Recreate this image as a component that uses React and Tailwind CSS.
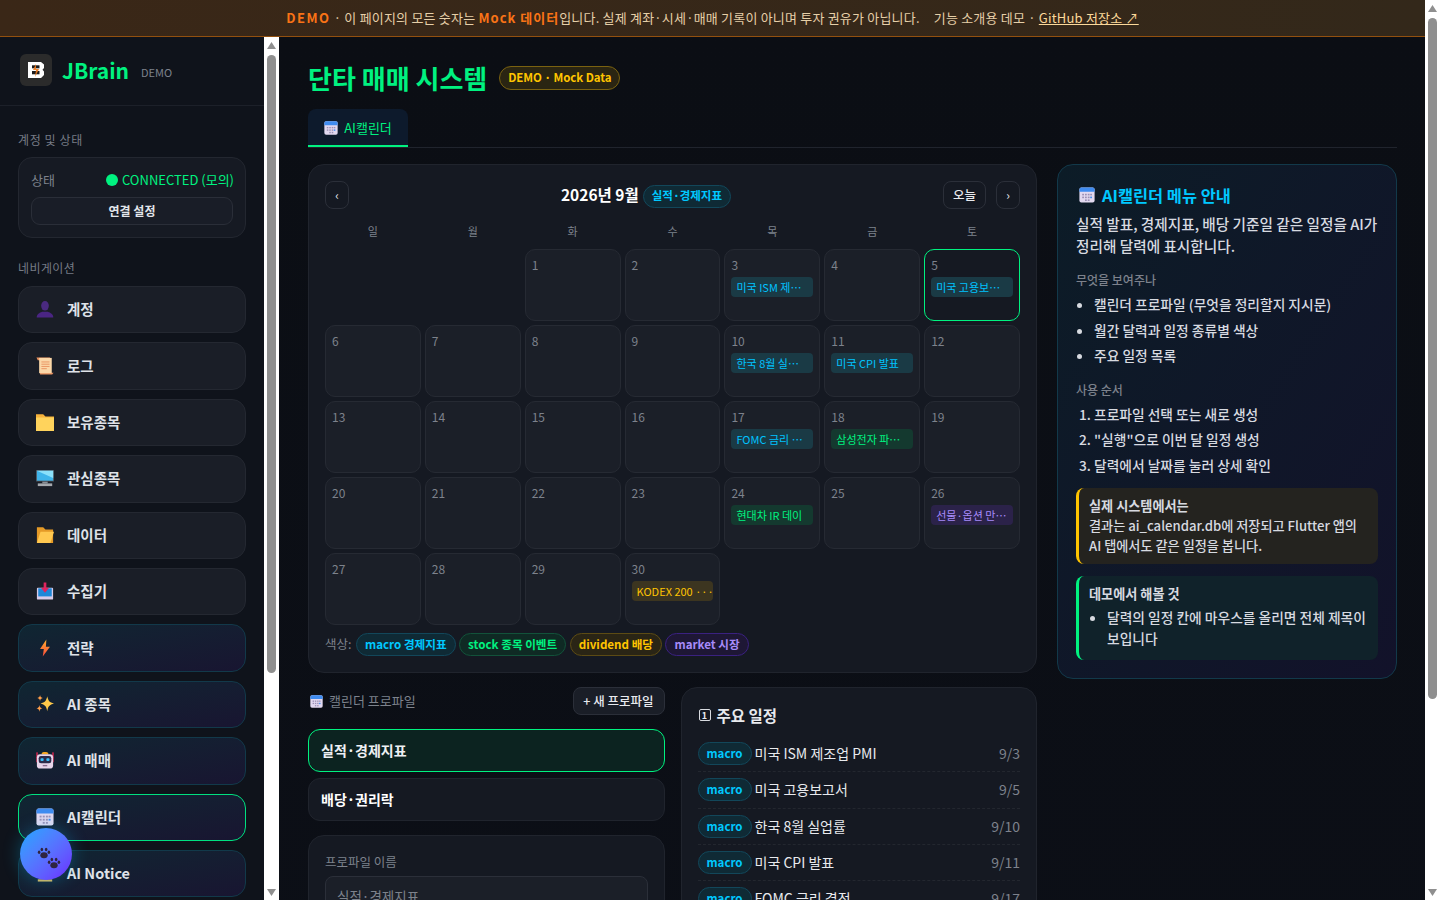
import React from "react";

const I = ({ children, size = 18, className = "" }) => (
  <svg width={size} height={size} viewBox="0 0 20 20" className={`shrink-0 ${className}`}>{children}</svg>
);
const Person = () => (
  <I><ellipse cx="10" cy="6.500" rx="4.300" ry="5.300" fill="#4a2a80" /><path d="M.8 19.500c0-4 3-5.300 6-6.500h6.400c3 1.200 6 2.500 6 6.500z" fill="#4a2583" /></I>
);
const Scroll = () => (
  <I><path d="M.5 .5h15v17h4l-1.500 2H4.500V3.500H2z" fill="#e9915f" /><rect x="3.500" y="1" width="14" height="17" fill="#fbd7a8" /><path d="M6 5.500h9M6 8h9M6 10.500h9M6 13h6" stroke="#e88e5c" strokeWidth="1" /></I>
);
const Folder = () => (
  <I><path d="M0 1.500h8l2.500 2.500H20v16H0z" fill="#f7b23b" /><rect x="0" y="5" width="20" height="15" fill="#ffd35c" /></I>
);
const FolderOpen = () => (
  <I><path d="M1 1.500h7l2.500 2.500H19v15H1z" fill="#e59a27" /><path d="M5 6.500h15l-4 12.500H1z" fill="#ffc850" /></I>
);
const Monitor = () => (
  <I><rect x="0" y="1" width="20" height="13" rx=".5" fill="#50545b" /><rect x="1" y="2" width="18" height="11" fill="#3fb4ea" /><path d="M1 2h18v8z" fill="#8be0fa" /><rect x="7" y="14" width="6" height="2" fill="#8b8f96" /><rect x="2" y="16" width="16" height="3" fill="#a5a8ad" /></I>
);
const Inbox = () => (
  <I><rect x="1" y="6.500" width="18" height="13" rx="1" fill="#d8cbe8" /><rect x="2.500" y="7" width="15" height="9" fill="#1e88d8" /><path d="M8.500 .5h3v6h3L10 12 5.500 6.500h3z" fill="#e0245e" /></I>
);
const Bolt = () => (
  <I><defs><linearGradient id="boltg" x1="0" y1="0" x2="0" y2="1"><stop offset="0" stopColor="#ffb02e" /><stop offset="1" stopColor="#f8483c" /></linearGradient></defs><path d="M11.500 .5 4.500 11h4.200L7.500 19.500 15.500 8.500h-4.500z" fill="url(#boltg)" /></I>
);
const Sparkles = () => (
  <I><path d="M12.500 1.500c1 5 2.500 6.800 7.500 8-5 1.300-6.500 3-7.500 8.500-1-5.500-2.500-7.200-7.500-8.500 5-1.200 6.500-3 7.500-8z" fill="#ffc94a" /><path d="M4.500 0c.4 2.200 1 2.800 3 3.300-2 .5-2.600 1.200-3 3.400-.4-2.200-1-2.900-3-3.400 2-.5 2.600-1.100 3-3.300z" fill="#ff9f4a" /><path d="M3.800 11c.4 2.500 1.100 3.200 3.300 3.700-2.200.5-2.900 1.300-3.300 3.800-.4-2.500-1.100-3.300-3.300-3.800 2.200-.5 2.900-1.200 3.300-3.700z" fill="#ff9f4a" /></I>
);
const Robot = () => (
  <I><rect x=".3" y="1.500" width="1.700" height="11" fill="#d0264f" /><rect x="18" y="1.500" width="1.700" height="11" fill="#d0264f" /><path d="M6.500 2.500c0-2 7-2 7 0v1.500h-7z" fill="#f5a623" /><rect x="1" y="3.500" width="18" height="16" rx="3.500" fill="#e8d5ea" /><rect x="3" y="5.500" width="14" height="8" rx="2.500" fill="#2b2b4a" /><rect x="5" y="8" width="3.500" height="3" rx="1" fill="#38bdf8" /><rect x="11.500" y="8" width="3.500" height="3" rx="1" fill="#38bdf8" /><rect x="7.500" y="15.500" width="5" height="1.500" fill="#8a6d8f" /></I>
);
const Cal = ({ size = 18, className = "" }) => (
  <I size={size} className={className}><rect x=".5" y=".5" width="19" height="19" rx="2.500" fill="#e2d9f0" /><path d="M.5 6V3A2.500 2.500 0 0 1 3 .5h14A2.500 2.500 0 0 1 19.500 3v3z" fill="#3f8cf0" /><g fill="#9c90b5"><rect x="4" y="8.500" width="2.200" height="2" /><rect x="7.500" y="8.500" width="2.200" height="2" /><rect x="11" y="8.500" width="2.200" height="2" /><rect x="14" y="8.500" width="2.200" height="2" /><rect x="4" y="12" width="2.200" height="2" /><rect x="7.500" y="12" width="2.200" height="2" /><rect x="11" y="12" width="2.200" height="2" /><rect x="14" y="12" width="2.200" height="2" fill="#3f8cf0" /><rect x="7.500" y="15.500" width="2.200" height="2" /><rect x="11" y="15.500" width="2.200" height="2" /></g></I>
);
const Megaphone = () => (
  <I><path d="M2 17h16v2.500H2z" fill="#d9b45a" /><path d="M4 16c1-6 2-10 6-10s5 4 6 10z" fill="#f5c542" /></I>
);
const Paw = ({ className = "" }) => (
  <svg width="14" height="12" viewBox="0 0 15 14" className={className}>
    <g fill="#2f2440"><ellipse cx="7.500" cy="9.700" rx="4.300" ry="3.500" /><ellipse cx="1.800" cy="6.200" rx="1.500" ry="2" /><ellipse cx="5" cy="3" rx="1.500" ry="2.100" /><ellipse cx="10" cy="3" rx="1.500" ry="2.100" /><ellipse cx="13.200" cy="6.200" rx="1.500" ry="2" /></g>
  </svg>
);
const BLogo = () => (
  <svg width="18" height="18" viewBox="0 0 18 18">
    <path d="M1 1h13l3 2.500V7l-1.500 1.800L17 10.500V14l-3 3H1z" fill="#fff" />
    <rect x="5" y="4.300" width="7.500" height="3" fill="#1c1c1c" /><rect x="5" y="10" width="7.500" height="3.300" fill="#1c1c1c" />
    <path d="M9 3 6 9h3l-1 7 4-8H9z" fill="#f07a1c" opacity=".9" />
  </svg>
);

function Scrollbar({ thumb }) {
  return (
    <div className="flex w-[15px] shrink-0 flex-col items-center bg-white">
      <svg width="9" height="7" viewBox="0 0 9 7" className="mt-[5px] shrink-0"><path d="M4.500 0 9 7H0z" fill="#8f8f8f" /></svg>
      <div className={`mt-[6px] w-[9px] rounded-[4.500px] bg-[#8f8f8f] ${thumb}`} />
      <svg width="9" height="7" viewBox="0 0 9 7" className="mt-auto mb-[4px] shrink-0"><path d="M4.500 7 9 0H0z" fill="#8f8f8f" /></svg>
    </div>
  );
}

const NAV = [
  ["계정", Person, 0], ["로그", Scroll, 0], ["보유종목", Folder, 0], ["관심종목", Monitor, 0],
  ["데이터", FolderOpen, 0], ["수집기", Inbox, 0], ["전략", Bolt, 1], ["AI 종목", Sparkles, 1],
  ["AI 매매", Robot, 1], ["AI캘린더", Cal, 2], ["AI Notice", Megaphone, 1],
];

const CHIP = {
  macro: "bg-[#1a3a45] text-[#00c2ff]",
  stock: "bg-[#14392f] text-[#00f280]",
  dividend: "bg-[#3c3520] text-[#ffc400]",
  market: "bg-[#2b2249] text-[#a78bfa]",
};
const EVENTS = {
  3: ["미국 ISM 제⋯", "macro"], 5: ["미국 고용보⋯", "macro"], 10: ["한국 8월 실⋯", "macro"],
  11: ["미국 CPI 발표", "macro"], 17: ["FOMC 금리 ⋯", "macro"], 18: ["삼성전자 파⋯", "stock"],
  24: ["현대차 IR 데이", "stock"], 26: ["선물·옵션 만⋯", "market"], 30: ["KODEX 200 ···", "dividend"],
};
const UPCOMING = [
  ["미국 ISM 제조업 PMI", "9/3"], ["미국 고용보고서", "9/5"], ["한국 8월 실업률", "9/10"],
  ["미국 CPI 발표", "9/11"], ["FOMC 금리 결정", "9/17"],
];
const PILL = {
  macro: "border-[#12475a] bg-[#0f2a35] text-[#00c8ff]",
  stock: "border-[#12523a] bg-[#0f2a24] text-[#00f280]",
  dividend: "border-[#5c4b14] bg-[#2a2515] text-[#ffc400]",
  market: "border-[#3a2180] bg-[#1e1735] text-[#a78bfa]",
};

function Sidebar() {
  return (
    <aside className="flex h-[863px] w-[279px] shrink-0 bg-[#0f131b]">
      <div className="w-[264px] overflow-hidden">
        <div className="flex h-[69px] items-center border-b border-[#1c2029] pl-5 pb-[2px]">
          <div className="flex h-8 w-8 items-center justify-center rounded-md bg-[#2b2b2b]"><BLogo /></div>
          <span className="ml-[10px] text-[21px] leading-none font-bold text-[#00f280]">JBrain</span>
          <span className="ml-3 mt-1 text-[11px] text-[#7d828c]">DEMO</span>
        </div>
        <div className="px-[18px]">
          <div className="mt-[25px] mb-[8px] text-[12px] leading-[18px] tracking-[0.6px] text-[#767b85]">계정 및 상태</div>
          <div className="rounded-[14px] border border-[#232730] bg-[#161a23] px-3 pt-[13px] pb-3">
            <div className="flex items-center justify-between text-[13px] leading-[18px]">
              <span className="text-[#7d828c]">상태</span>
              <span className="mr-[-1px] flex items-center gap-[4px] text-[#00f280]"><i className="block h-3 w-3 rounded-full bg-[#00f280]" />CONNECTED (모의)</span>
            </div>
            <div className="mt-[8px] flex h-7 items-center justify-center rounded-[9px] border border-[#2a2e38] bg-[#191d27] text-[12px] font-semibold text-[#e2e5ea]">연결 설정</div>
          </div>
          <div className="mt-[21px] mb-[9px] text-[12px] leading-[18px] tracking-[0.4px] text-[#767b85]">네비게이션</div>
          <nav className="flex flex-col gap-[9px]">
            {NAV.map(([label, Icon, kind]) => (
              <div
                key={label}
                className={
                  "flex h-[47.400px] items-center gap-[13px] rounded-[14px] border pb-px pl-[17px] text-[14.500px] font-bold text-[#dfe2e8] " +
                  (kind === 0
                    ? "border-[#242831] bg-[#1a1e27]"
                    : kind === 1
                    ? "border-[#12394a] bg-gradient-to-br from-[#0f2632] to-[#181531]"
                    : "border-[#00e080] bg-gradient-to-br from-[#0f2632] to-[#181531]")
                }
              >
                <Icon />
                <span>{label}</span>
              </div>
            ))}
          </nav>
        </div>
      </div>
      <Scrollbar thumb="h-[618px]" />
    </aside>
  );
}

function Calendar() {
  const blanks = [0, 1];
  const days = Array.from({ length: 30 }, (_, i) => i + 1);
  return (
    <section className="rounded-2xl border border-[#20242d] bg-[#151922] px-4 pt-4 pb-[16px]">
      <div className="flex h-7 items-center justify-between">
        <div className="flex h-7 w-6 items-center justify-center rounded-lg border border-[#2b2f39] text-[12px] leading-none text-[#e8eaee]">‹</div>
        <div className="flex h-7 items-center justify-center gap-1">
          <span className="text-[15.500px] font-bold text-white">2026년 9월</span>
          <span className={`mt-[2px] flex h-[23px] items-center rounded-full border px-[8px] text-[11.500px] font-bold ${PILL.macro}`}>실적·경제지표</span>
        </div>
        <div className="flex items-center gap-[10px]">
          <div className="flex h-7 w-[43px] items-center justify-center rounded-lg border border-[#2b2f39] text-[12.500px] font-medium text-[#e8eaee]">오늘</div>
          <div className="flex h-7 w-6 items-center justify-center rounded-lg border border-[#2b2f39] text-[12px] leading-none text-[#e8eaee]">›</div>
        </div>
      </div>
      <div className="mt-[13px] grid grid-cols-7 gap-1">
        {["일", "월", "화", "수", "목", "금", "토"].map((d) => (
          <div key={d} className="h-[18px] text-center text-[11px] leading-[18px] text-[#7d828c]">{d}</div>
        ))}
      </div>
      <div className="mt-[9px] grid grid-cols-7 gap-1">
        {blanks.map((b) => <div key={b} />)}
        {days.map((d) => {
          const ev = EVENTS[d];
          return (
            <div key={d} className={"h-[72px] rounded-[10px] border bg-[#1b1f28] px-[6px] pt-[6px] " + (d === 5 ? "border-[#00f280] bg-[#151922]" : "border-[#262a33]")}>
              <div className="text-[12px] leading-[18px] text-[#7d828c]">{d}</div>
              {ev && (
                <div className={`mt-[3px] h-5 overflow-hidden rounded pl-[5px] text-[11px] leading-5 whitespace-nowrap ${CHIP[ev[1]]}`}>{ev[0]}</div>
              )}
            </div>
          );
        })}
      </div>
      <div className="mt-[8px] flex items-center gap-[3.500px] text-[12.500px] text-[#7d828c]">
        <span className="mr-px">색상:</span>
        <span className={`flex h-[23px] items-center rounded-full border px-[8px] text-[11.600px] font-bold ${PILL.macro}`}>macro 경제지표</span>
        <span className={`flex h-[23px] items-center rounded-full border px-[8px] text-[11.600px] font-bold ${PILL.stock}`}>stock 종목 이벤트</span>
        <span className={`flex h-[23px] items-center rounded-full border px-[8px] text-[11.600px] font-bold ${PILL.dividend}`}>dividend 배당</span>
        <span className={`flex h-[23px] items-center rounded-full border px-[8px] text-[11.600px] font-bold ${PILL.market}`}>market 시장</span>
      </div>
    </section>
  );
}

function Guide() {
  return (
    <aside className="w-[340px] shrink-0 self-start rounded-2xl border border-[#12394a] bg-gradient-to-br from-[#0c1c27] to-[#12122a] px-[18px] pt-[18px] pb-[18px] break-keep">
      <div className="flex items-center gap-[7px] text-[16.400px] leading-[24px] font-bold text-[#00c8ff]"><Cal size={16} className="ml-[3px]" /><span>AI캘린더 메뉴 안내</span></div>
      <p className="mt-[6px] text-[14.650px] leading-[22px] font-medium text-[#d7dae0]">실적 발표, 경제지표, 배당 기준일 같은 일정을 AI가 정리해 달력에 표시합니다.</p>
      <div className="mt-[14px] text-[12px] leading-[18px] font-medium text-[#7d828c]">무엇을 보여주나</div>
      <ul className="mt-[6px] list-disc pl-[18px] text-[13.750px] leading-[19.500px] font-medium text-[#d7dae0]">
        <li className="mb-[6px]">캘린더 프로파일 (무엇을 정리할지 지시문)</li>
        <li className="mb-[6px]">월간 달력과 일정 종류별 색상</li>
        <li>주요 일정 목록</li>
      </ul>
      <div className="mt-[15px] text-[12px] leading-[18px] font-medium text-[#7d828c]">사용 순서</div>
      <ol className="mt-[6px] list-decimal pl-[18px] text-[13.750px] leading-[19.500px] font-medium text-[#d7dae0]">
        <li className="mb-[6px]">프로파일 선택 또는 새로 생성</li>
        <li className="mb-[6px]">"실행"으로 이번 달 일정 생성</li>
        <li>달력에서 날짜를 눌러 상세 확인</li>
      </ol>
      <div className="mt-[13px] rounded-lg border-l-[3px] border-[#ffc400] bg-[#24231f] px-[10px] py-[8px] text-[13.150px] leading-[20px] font-medium text-[#d7dae0]">
        <div className="font-bold">실제 시스템에서는</div>
        결과는 ai_calendar.db에 저장되고 Flutter 앱의 AI 탭에서도 같은 일정을 봅니다.
      </div>
      <div className="mt-[12px] rounded-lg border-l-[3px] border-[#00f280] bg-[#10222a] px-[10px] pt-[8px] pb-[11px] text-[13.750px] leading-[21px] font-medium text-[#d7dae0]">
        <div className="text-[13.150px] leading-[20px] font-bold">데모에서 해볼 것</div>
        <ul className="mt-[3px] list-disc pl-[18px]"><li>달력의 일정 칸에 마우스를 올리면 전체 제목이 보입니다</li></ul>
      </div>
    </aside>
  );
}

function Profiles() {
  return (
    <div className="min-w-0">
      <div className="flex h-7 items-center justify-between">
        <div className="flex items-center gap-[6px] pl-[2px] text-[13px] text-[#7d828c]"><Cal size={13} /><span>캘린더 프로파일</span></div>
        <div className="flex h-7 w-[92px] items-center justify-center rounded-lg border border-[#2b2f39] bg-[#1a1e27] text-[12.500px] font-medium text-[#e8eaee]">+ 새 프로파일</div>
      </div>
      <div className="mt-[14px] flex h-[43px] items-center rounded-xl border border-[#00f280] bg-[#0c2320] pl-3 text-[14px] font-bold text-[#eef0f3]">실적·경제지표</div>
      <div className="mt-[6px] flex h-[43px] items-center rounded-xl border border-[#20242d] bg-[#151922] pl-3 text-[14px] font-bold text-white">배당·권리락</div>
      <div className="mt-[14px] h-[300px] rounded-2xl border border-[#20242d] bg-[#151922] px-4 pt-4">
        <div className="text-[12.500px] leading-[20px] text-[#7d828c]">프로파일 이름</div>
        <div className="mt-[4px] flex h-10 items-center rounded-lg border border-[#2b2f39] bg-[#1b1f28] px-[11px] text-[13.500px] text-[#7d828c]">실적·경제지표</div>
      </div>
    </div>
  );
}

function Upcoming() {
  return (
    <div className="h-[393px] min-w-0 rounded-2xl border border-[#20242d] bg-[#151922] px-4 pt-[15px]">
      <div className="flex items-center gap-[6px] pl-px text-[15.500px] leading-[24px] font-bold text-[#e8eaee]">
        <span className="flex h-3 w-3 items-center justify-center rounded-[2px] border border-[#d8dbe0] text-[9px] leading-none">1</span>
        <span>주요 일정</span>
      </div>
      <div className="mt-[9px]">
        {UPCOMING.map(([t, d]) => (
          <div key={t} className="flex h-[36.300px] items-center justify-between border-b border-dashed border-[#23272f] text-[14px]">
            <div className="flex items-center gap-[3px]">
              <span className={`flex h-[23px] items-center rounded-full border px-[8px] text-[11.500px] font-bold ${PILL.macro}`}>macro</span>
              <span className="text-[#e8eaee]">{t}</span>
            </div>
            <span className="text-[#7d828c]">{d}</span>
          </div>
        ))}
      </div>
    </div>
  );
}

export default function App() {
  return (
    <div className="flex h-screen overflow-hidden bg-[#0b0e14] font-['Noto_Sans_CJK_KR','Noto_Sans',sans-serif]">
      <div className="min-w-0 flex-1">
        <div className="flex h-[37px] items-center justify-center border-b border-[#92500f] bg-gradient-to-r from-[#3a2717] to-[#33281a] text-[13px] tracking-[0.2px] text-[#e6cfa8]">
          <b className="font-bold tracking-[1.500px] text-[#f97316]">DEMO</b>
          <span>&nbsp;· 이 페이지의 모든 숫자는&nbsp;</span>
          <b className="font-bold tracking-[1px] text-[#f97316]">Mock 데이터</b>
          <span>입니다. 실제 계좌·시세·매매 기록이 아니며 투자 권유가 아닙니다.</span>
          <span className="ml-[14px]">기능 소개용 데모 ·&nbsp;</span>
          <span className="text-[#fcd99a] underline">GitHub 저장소 ↗</span>
        </div>
        <div className="flex items-start">
          <Sidebar />
          <main className="min-w-0 flex-1 bg-gradient-to-b from-[#0b0e14] to-[#0c0f17] pl-[29px] pr-[28px] pt-[22px] pb-[60px]">
            <div className="flex items-center gap-3">
              <h1 className="text-[26px] leading-[38px] font-bold text-[#00f280]">단타 매매 시스템</h1>
              <span className="flex h-6 items-center rounded-full border border-[#7a6210] bg-[#2a2512] px-2 text-[11.500px] font-bold tracking-[-0.1px] text-[#ffc400]">DEMO · Mock Data</span>
            </div>
            <div className="mt-[12px] border-b border-[#20242d]">
              <div className="flex h-[38px] w-[100px] items-center justify-center gap-[6px] rounded-t-lg border-b-2 border-[#00f280] bg-[#0d1a2c] pt-px text-[13px] text-[#00f280]"><Cal size={14} /><span>AI캘린더</span></div>
            </div>
            <div className="mt-[16px] flex items-start gap-5">
              <div className="min-w-0 flex-1">
                <Calendar />
                <div className="mt-[14px] grid grid-cols-2 items-start gap-4">
                  <Profiles />
                  <Upcoming />
                </div>
              </div>
              <Guide />
            </div>
          </main>
        </div>
      </div>
      <Scrollbar thumb="h-[681px]" />
      <div className="fixed left-5 top-[828px] h-[52px] w-[52px] rounded-full bg-gradient-to-br from-[#00a8ff] to-[#6b21ff] shadow-[0_0_18px_rgba(0,200,255,0.3)]">
        <Paw className="absolute left-[17px] top-[19px]" />
        <Paw className="absolute left-[27px] top-[29px]" />
      </div>
    </div>
  );
}
